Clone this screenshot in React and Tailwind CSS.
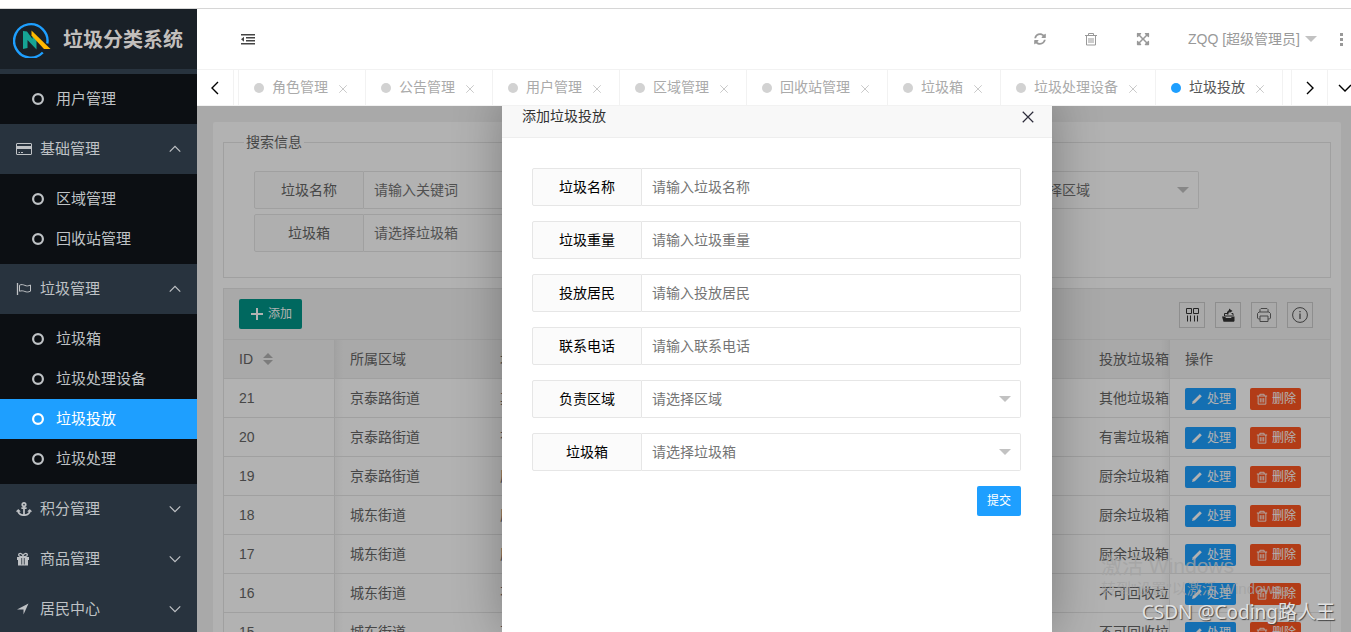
import React from "react";
import { FaAnchor, FaExpandArrowsAlt, FaSyncAlt } from "react-icons/fa";

const menu = [
  { children: [{ name: "用户管理" }] },
  {
    name: "基础管理",
    icon: CardIcon,
    children: [{ name: "区域管理" }, { name: "回收站管理" }],
  },
  {
    name: "垃圾管理",
    icon: FlagIcon,
    children: [
      { name: "垃圾箱" },
      { name: "垃圾处理设备" },
      { name: "垃圾投放", active: true },
      { name: "垃圾处理" },
    ],
  },
  { name: "积分管理", icon: FaAnchor },
  { name: "商品管理", icon: GiftIcon },
  { name: "居民中心", icon: ArrowIcon },
];

const tabs = [
  "角色管理",
  "公告管理",
  "用户管理",
  "区域管理",
  "回收站管理",
  "垃圾箱",
  "垃圾处理设备",
  "垃圾投放",
];

const rows = [
  { id: 21, area: "京泰路街道", kind: "其他垃圾" },
  { id: 20, area: "京泰路街道", kind: "有害垃圾" },
  { id: 19, area: "京泰路街道", kind: "厨余垃圾" },
  { id: 18, area: "城东街道", kind: "厨余垃圾" },
  { id: 17, area: "城东街道", kind: "厨余垃圾" },
  { id: 16, area: "城东街道", kind: "不可回收垃圾" },
  { id: 15, area: "城东街道", kind: "不可回收垃圾" },
];

function CardIcon({ className }) {
  return (
    <svg className={className} viewBox="0 0 16 16" fill="none" stroke="currentColor">
      <rect x="0.5" y="2.5" width="15" height="11" rx="0.5" />
      <path d="M0.5 6.5h15" strokeWidth="3" />
      <path d="M2.5 11.5h1.5M5 11.5h2" />
    </svg>
  );
}

function FlagIcon({ className }) {
  return (
    <svg className={className} viewBox="0 0 16 16" fill="none" stroke="currentColor">
      <path d="M1.5 2v12" strokeWidth="1.3" />
      <path d="M3.5 4.2c2-1 3.6-0.6 5.400 0.200s3.400 0.700 5.600-0.400v6.200c-2.200 1-3.800 1-5.600 0.300s-3.400-1-5.400-0.200z" />
    </svg>
  );
}

function GiftIcon({ className }) {
  return (
    <svg className={className} viewBox="0 0 16 14" fill="currentColor">
      <path d="M1 5h12v3H1zM2 8h10v5.500H2z" />
      <path d="M7 4.800C5 4.800 2.700 4.500 2.700 2.700 2.700 1 5.500 0.500 7 3.600 8.500 0.500 11.300 1 11.300 2.700 11.300 4.500 9 4.800 7 4.800z" fill="none" stroke="currentColor" strokeWidth="1.300" />
      <path d="M5.700 6v6.500M8.300 6v6.500" stroke="#28333e" strokeWidth="0.800" />
    </svg>
  );
}

function ArrowIcon({ className }) {
  return (
    <svg className={className} viewBox="0 0 16 14" fill="currentColor">
      <path d="M12.500 1.500L7.500 12.500V7.500H1z" />
    </svg>
  );
}

function TrashIcon({ className }) {
  return (
    <svg className={className} viewBox="0 0 14 14" fill="none" stroke="currentColor">
      <path d="M1 3.500h12M4.500 3.500v-2h5v2M2.500 3.500v9.500h9v-9.500" />
      <path d="M5 6v5M7 6v5M9 6v5" />
    </svg>
  );
}

function Chevron({ className, d }) {
  return (
    <svg className={className} viewBox="0 0 16 16" fill="none" stroke="currentColor" strokeWidth="1.400">
      <path d={d} />
    </svg>
  );
}
const UP = "M2 11l6-6 6 6";
const DOWN = "M2 5l6 6 6-6";
const LEFT = "M11 2l-6 6 6 6";
const RIGHT = "M5 2l6 6-6 6";
const CROSS = "M2 2l12 12M14 2L2 14";

function Caret({ className }) {
  return (
    <svg className={className} viewBox="0 0 12 6" fill="currentColor">
      <path d="M0 0h12L6 6z" />
    </svg>
  );
}

function Logo() {
  return (
    <svg className="h-9 w-[38px] shrink-0" viewBox="0 0 38 36" fill="none">
      <path d="M34.300 21.500A16.700 16.700 0 1 0 29.800 30.500" stroke="#1e9fff" strokeWidth="2.400" />
      <path d="M10 9l4 0.500 5.500 7.500V12l4 4v11.500L14.500 18v8L10 27z" fill="#16a394" />
      <path d="M18.500 8.500L37.500 27H31L18.500 13.500z" fill="#ffb800" />
    </svg>
  );
}

function Field({ id, label, hint, select, wrap }) {
  return (
    <div className={"flex h-[38px] " + (wrap || "")}>
      <label
        htmlFor={id}
        className="flex w-[110px] shrink-0 items-center justify-center rounded-l-xs border border-[#e6e6e6] bg-[#fbfbfb]"
      >
        {label}
      </label>
      <div className="relative min-w-0 flex-1">
        {select ? (
          <>
            <select
              id={id}
              className="h-full w-full appearance-none rounded-r-xs border border-l-0 border-[#e6e6e6] bg-white px-[10px] text-[#757575] outline-none"
            >
              <option>{hint}</option>
            </select>
            <Caret className="pointer-events-none absolute top-4 right-[10px] h-[6px] w-3 text-[#c2c2c2]" />
          </>
        ) : (
          <input
            id={id}
            type="text"
            placeholder={hint}
            className="h-full w-full rounded-r-xs border border-l-0 border-[#e6e6e6] bg-white px-[10px] outline-none placeholder:text-[#757575]"
          />
        )}
      </div>
    </div>
  );
}

function Sidebar() {
  return (
    <aside className="w-[197px] shrink-0 overflow-hidden bg-[#28333e] text-[15px] text-[#bfc2c5]">
      <div className="mb-[5px] flex h-[60px] items-center gap-3 bg-[#192027] pt-[2px] pl-[13px]">
        <Logo />
        <h1 className="text-[20px] font-bold whitespace-nowrap text-[#c2bfbd]">垃圾分类系统</h1>
      </div>
      <nav>
        <ul>
          {menu.map((group, i) => (
            <li key={i}>
              {group.name && (
                <a href="#" className="flex h-[50px] items-center pr-[15px] pl-4">
                  <group.icon className={"mr-2 w-4 " + (i < 3 ? "h-4" : "h-[14px]")} />
                  <span className="flex-1">{group.name}</span>
                  <Chevron className="size-[14px]" d={group.children ? UP : DOWN} />
                </a>
              )}
              {group.children && (
                <ul className="bg-[#0c0f13] py-[5px]">
                  {group.children.map((c) => (
                    <li key={c.name}>
                      <a
                        href="#"
                        className={
                          "flex h-10 items-center gap-3 pl-8 " +
                          (c.active ? "bg-[#1e9fff] text-white" : "")
                        }
                      >
                        <svg className="size-3" viewBox="0 0 12 12" fill="none">
                          <circle cx="6" cy="6" r="4.900" stroke="currentColor" strokeWidth="2.200" />
                        </svg>
                        {c.name}
                      </a>
                    </li>
                  ))}
                </ul>
              )}
            </li>
          ))}
        </ul>
      </nav>
    </aside>
  );
}

function Header() {
  return (
    <header className="flex h-[61px] shrink-0 items-center border-b border-[#f2f2f2] pl-[43px] text-[#999]">
      <button aria-label="收起菜单" className="text-[#444]">
        <svg className="size-4" viewBox="0 0 16 16" fill="currentColor">
          <path d="M1 3h14v1.600H1zM6 6h9v1.600H6zM6 9h9v1.600H6zM1 12h14v1.600H1zM4 5.800v5L1 8.300z" />
        </svg>
      </button>
      <div className="ml-auto flex items-center">
        <button aria-label="刷新" className="mr-[38px]">
          <FaSyncAlt className="size-3" />
        </button>
        <button aria-label="清理" className="mr-[38px]">
          <TrashIcon className="size-[14px]" />
        </button>
        <button aria-label="全屏" className="mr-[38px]">
          <FaExpandArrowsAlt className="size-[14px]" />
        </button>
        <button className="flex items-center gap-[5px]">
          ZQQ [超级管理员]
          <Caret className="h-[6px] w-3 text-[#c2c2c2]" />
        </button>
        <button aria-label="更多" className="ml-[23px] pr-2">
          <svg className="h-[13px] w-[3px]" viewBox="0 0 3 13" fill="currentColor">
            <path d="M0 0h3v3H0zM0 5h3v3H0zM0 10h3v3H0z" />
          </svg>
        </button>
      </div>
    </header>
  );
}

function TabBar() {
  return (
    <div className="flex h-9 shrink-0 overflow-hidden border-b border-[#f2f2f2] text-[#aaa]">
      <button aria-label="向左" className="mr-1 flex w-[37px] shrink-0 items-center justify-center border-r border-[#f2f2f2] text-black">
        <Chevron className="size-4" d={LEFT} />
      </button>
      <ul className="flex min-w-0 flex-1 overflow-hidden">
        {tabs.map((t, i) => {
          const active = i === tabs.length - 1;
          return (
            <li
              key={t}
              className={
                "flex shrink-0 items-center border-l border-[#f2f2f2] px-[15px] " +
                (active ? "border-r text-[#555]" : "")
              }
            >
              <span className={"mr-2 size-[10px] rounded-full " + (active ? "bg-[#1e9fff]" : "bg-[#d2d2d2]")} />
              <a href="#">{t}</a>
              <button aria-label={"关闭" + t} className="mt-[2px] ml-2 flex w-[14px] justify-center text-[#c2c2c2]">
                <Chevron className="size-[10px]" d={CROSS} />
              </button>
            </li>
          );
        })}
      </ul>
      <button aria-label="向右" className="flex w-9 shrink-0 items-center justify-center border-l border-[#f2f2f2] text-black">
        <Chevron className="size-4" d={RIGHT} />
      </button>
      <button aria-label="标签操作" className="flex w-6 shrink-0 items-center border-l border-[#f2f2f2] pl-[9px] text-black">
        <Chevron className="size-4 shrink-0" d={DOWN} />
      </button>
    </div>
  );
}

function ToolButton({ label, children }) {
  return (
    <button aria-label={label} className="flex size-[26px] items-center justify-center border border-[#ccc] text-[#333]">
      {children}
    </button>
  );
}

function Content() {
  return (
    <div className="rounded-xs bg-white px-[10px] pt-[10px] pb-4 text-[#666]">
      <fieldset className="border border-[#e6e6e6] pb-[25px]">
        <legend className="ml-5 px-[2px] leading-5">搜索信息</legend>
        <div className="mt-[19px] grid grid-cols-[299px_299px_299px] gap-x-6 gap-y-[5px] pl-[30px]">
          <Field id="q-name" label="垃圾名称" hint="请输入关键词" />
          <Field id="q-area" label="区域" hint="请选择区域" select wrap="col-start-3" />
          <Field id="q-box" label="垃圾箱" hint="请选择垃圾箱" select />
        </div>
      </fieldset>

      <div className="mt-[10px] border border-[#e6e6e6]">
        <div className="flex h-[51px] items-center border-b border-[#e6e6e6] bg-[#f2f2f2] pr-[17px] pl-[15px]">
          <button className="flex h-[30px] items-center gap-[3px] rounded-xs bg-[#009688] px-[10px] text-[12px] text-white">
            <svg className="size-4" viewBox="0 0 16 16" stroke="currentColor" strokeWidth="2">
              <path d="M8 2v12M2 8h12" />
            </svg>
            添加
          </button>
          <div className="ml-auto flex gap-[10px] pt-[2px]">
            <ToolButton label="筛选列">
              <svg className="size-4" viewBox="0 0 16 16" fill="none" stroke="currentColor">
                <path d="M2.500 1.500h5v5h-5zM9.500 1.500h5v5h-5zM3.500 8.500v6M6.500 8.500v6M10.500 8.500v6M13.500 8.500v6" />
              </svg>
            </ToolButton>
            <ToolButton label="导出">
              <svg className="size-4" viewBox="0 0 16 16" fill="currentColor">
                <path d="M2 9.500h3l1 1.500h5l1-1.500h2.500V14l-0.700 0.700H3.500z" />
                <path d="M4.500 9V6.500H7M13 9V6.500h-1.500M5 9h7" fill="none" stroke="currentColor" />
                <path d="M7 7.500V5l2-2V1.500L12.500 4 9.500 6V4.500L8.500 6v1.500z" />
              </svg>
            </ToolButton>
            <ToolButton label="打印">
              <svg className="size-4" viewBox="0 0 16 16" fill="none" stroke="#666">
                <path d="M4 5V2.500l1-1h6l1 1V5" />
                <path d="M4 12H2.500L1.500 11V6.500l1.500-1.500h10l1.500 1.500V11l-1 1H12" />
                <path d="M4 9h8v5.500H4z" />
              </svg>
            </ToolButton>
            <ToolButton label="提示">
              <svg className="size-4" viewBox="0 0 16 16" fill="none" stroke="#555">
                <circle cx="8" cy="8" r="7.400" />
                <path d="M8 6.500V12M8 4v1.300" strokeWidth="1.300" />
              </svg>
            </ToolButton>
          </div>
        </div>

        <table className="w-full table-fixed border-separate border-spacing-0 text-left">
          <colgroup>
            <col className="w-[111px]" />
            <col className="w-[150px]" />
            <col />
            <col className="w-[85px]" />
            <col className="w-[161px]" />
          </colgroup>
          <thead className="bg-[#f2f2f2]">
            <tr className="h-[39px] [&>th]:border-b [&>th]:border-[#e6e6e6] [&>th]:pl-[15px] [&>th]:font-normal">
              <th className="border-r">
                <span className="flex items-center gap-[10px]">
                  ID
                  <svg className="h-3 w-[10px]" viewBox="0 0 10 12" fill="#b2b2b2">
                    <path d="M0 5l5-5 5 5zM0 7h10l-5 5z" />
                  </svg>
                </span>
              </th>
              <th className="bg-[linear-gradient(to_right,rgba(0,0,0,0.04),transparent_8px)]">所属区域</th>
              <th>垃圾名称</th>
              <th className="overflow-hidden bg-[linear-gradient(to_left,rgba(0,0,0,0.04),transparent_8px)] whitespace-nowrap">投放垃圾箱</th>
              <th className="border-l">操作</th>
            </tr>
          </thead>
          <tbody>
            {rows.map((r) => (
              <tr key={r.id} className="h-[39px] [&>td]:border-b [&>td]:border-[#e6e6e6] [&>td]:pl-[15px]">
                <td className="border-r">{r.id}</td>
                <td className="bg-[linear-gradient(to_right,rgba(0,0,0,0.04),transparent_8px)]">{r.area}</td>
                <td>{r.kind}</td>
                <td className="overflow-hidden bg-[linear-gradient(to_left,rgba(0,0,0,0.04),transparent_8px)] whitespace-nowrap">
                  {r.kind}箱
                </td>
                <td className="border-l pt-[2px]">
                  <div className="flex gap-[14px] text-[12px] text-white">
                    <button className="flex h-[22px] w-[51px] items-center gap-1 rounded-xs bg-[#1e9fff] pl-[6px]">
                      <svg className="size-3" viewBox="0 0 12 12" fill="currentColor">
                        <path d="M1 11l0.800-2.800L8.800 1.200l2 2L3.800 10.200z" />
                      </svg>
                      处理
                    </button>
                    <button className="flex h-[22px] w-[51px] items-center gap-1 rounded-xs bg-[#ff5722] pl-[6px]">
                      <TrashIcon className="size-3" />
                      删除
                    </button>
                  </div>
                </td>
              </tr>
            ))}
          </tbody>
        </table>
      </div>
    </div>
  );
}

function Dialog() {
  return (
    <div role="dialog" aria-label="添加垃圾投放" className="-mt-[10px] flex w-[550px] flex-col rounded-t-xs bg-white shadow-[1px_1px_50px_rgba(0,0,0,0.3)]">
      <div className="flex h-[42px] shrink-0 items-center justify-between border-b border-[#eee] bg-[#f8f8f8] pr-[17px] pl-5 text-[#333]">
        <h2>添加垃圾投放</h2>
        <button aria-label="关闭" className="text-[#2d2c3b]">
          <Chevron className="size-[14px]" d={CROSS} />
        </button>
      </div>
      <form className="flex flex-col gap-[15px] pt-[30px] pr-[31px] pl-[30px] text-black">
        <Field id="f-name" label="垃圾名称" hint="请输入垃圾名称" />
        <Field id="f-weight" label="垃圾重量" hint="请输入垃圾重量" />
        <Field id="f-person" label="投放居民" hint="请输入投放居民" />
        <Field id="f-phone" label="联系电话" hint="请输入联系电话" />
        <Field id="f-area" label="负责区域" hint="请选择区域" select />
        <Field id="f-box" label="垃圾箱" hint="请选择垃圾箱" select />
        <button type="button" className="h-[30px] self-end rounded-xs bg-[#1e9fff] px-[10px] text-[12px] text-white">
          提交
        </button>
      </form>
    </div>
  );
}

function Watermark() {
  return (
    <div className="pointer-events-none absolute right-4 bottom-2 flex w-[234px] flex-col whitespace-nowrap">
      <span className="text-[21px] leading-6 text-[#a3a3a3]/80">激活 Windows</span>
      <span className="text-[15px] leading-[22px] text-[#a3a3a3]/80">转到"设置"以激活 Windows。</span>
      <span className="self-end font-['Noto_Sans','Noto_Sans_CJK_SC',sans-serif] text-[19px] leading-6 text-[#e2e2e2] [text-shadow:1px_1px_1px_#444]">
        CSDN @Coding路人王
      </span>
    </div>
  );
}

export default function App() {
  return (
    <div className="relative flex h-screen flex-col overflow-hidden bg-white font-['Liberation_Sans','Noto_Sans_CJK_SC',sans-serif] text-[14px]">
      <div className="h-[9px] shrink-0 border-b border-[#d6d6d6]" />
      <div className="flex min-h-0 flex-1">
        <Sidebar />
        <div className="flex min-w-0 flex-1 flex-col">
          <Header />
          <TabBar />
          <main className="relative min-h-0 flex-1 overflow-hidden bg-[#f2f2f2] pt-4 pr-[10px] pl-4">
            <Content />
            <div className="absolute inset-0 flex justify-center bg-black/30 pl-[6px]">
              <Dialog />
            </div>
          </main>
        </div>
      </div>
      <Watermark />
    </div>
  );
}
